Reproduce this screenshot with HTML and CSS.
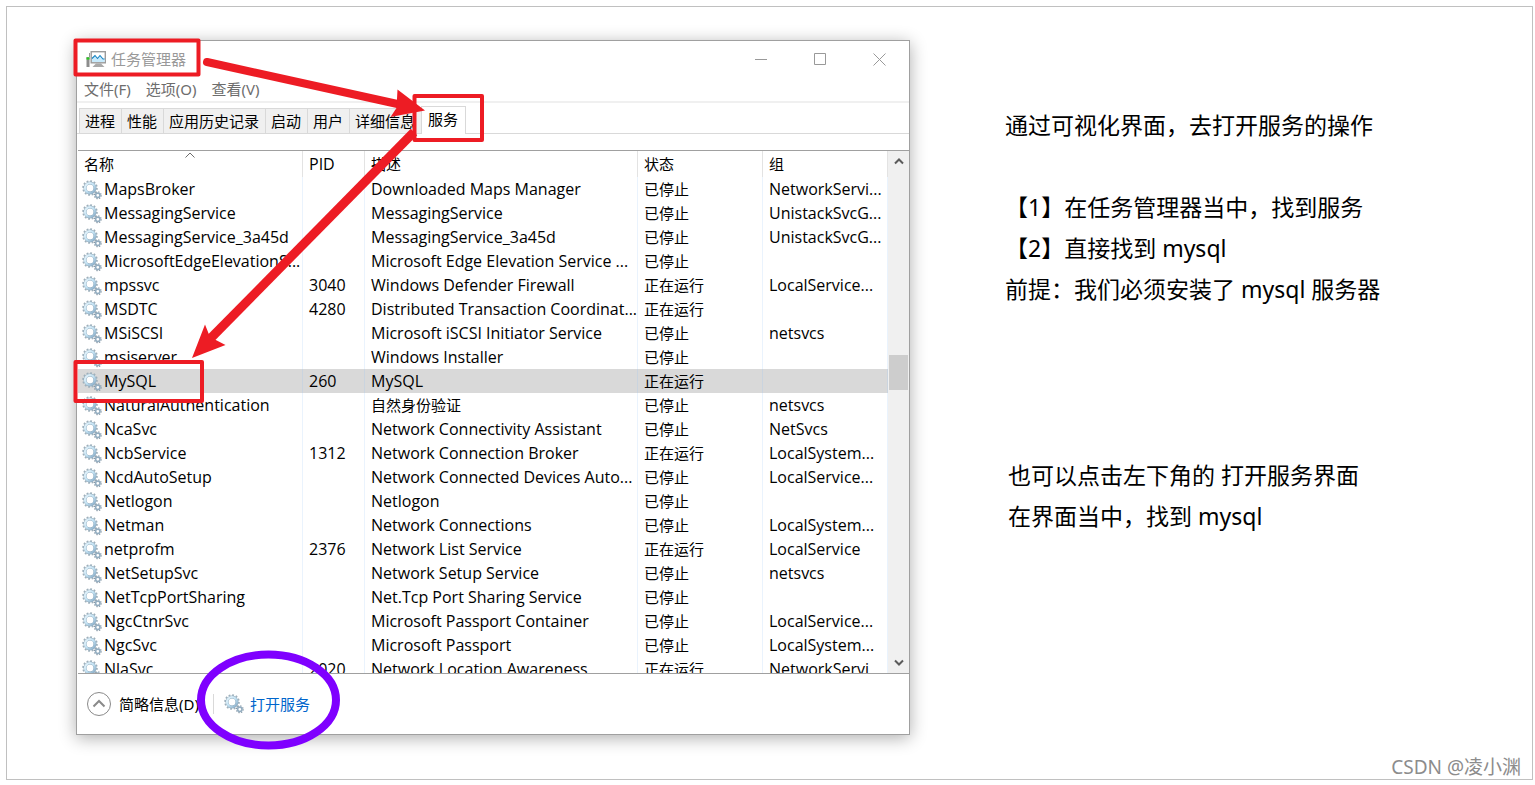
FILE: index.html
```html
<!DOCTYPE html>
<html lang="zh-CN">
<head>
<meta charset="utf-8">
<title>任务管理器</title>
<link rel="stylesheet" href="styles.css">
</head>
<body>
<svg class="sprite" aria-hidden="true">
  <defs>
    <linearGradient id="steel" x1="0" y1="0" x2="1" y2="1">
      <stop offset="0" stop-color="#e6f4fb"/><stop offset="0.5" stop-color="#c3e2f3"/><stop offset="1" stop-color="#86a9c4"/>
    </linearGradient>
    <symbol id="gear" viewBox="0 0 20 20">
      <circle cx="8" cy="8" r="6.9" fill="none" stroke="#9fb0bb" stroke-width="1.8" stroke-dasharray="1.8 1.81"/>
      <circle cx="8" cy="8" r="4.9" fill="none" stroke="#93adbf" stroke-width="3.2"/>
      <circle cx="8" cy="8" r="4.9" fill="none" stroke="url(#steel)" stroke-width="2.4"/>
      <circle cx="8" cy="8" r="3.2" fill="#fff"/>
      <circle cx="15.8" cy="15.3" r="3.4" fill="none" stroke="#8798a5" stroke-width="1.2" stroke-dasharray="1.3 1.37"/>
      <circle cx="15.8" cy="15.3" r="2.2" fill="#fff" stroke="#93adc0" stroke-width="1.6"/>
    </symbol>
  </defs>
</svg>
<main class="board">
  <div class="stage">
    <section class="window">
      <header class="titlebar">
        <svg class="app-icon" viewBox="0 0 20 18" aria-hidden="true">
          <path d="M3.500 3v4" stroke="#9b9b9b"/>
          <rect x="0.500" y="7" width="3" height="10" fill="#8c8c8c"/>
          <rect x="0.500" y="7.500" width="3" height="2" fill="#26d01c"/>
          <path d="M10 13.500h5l3.500 3.500h-12z" fill="#a9a9a9"/>
          <rect x="5.200" y="1.700" width="14.100" height="11.100" fill="#fff" stroke="#9b9b9b" stroke-width="1.400"/>
          <path d="M6 8.500L9 6l2.500 2.500L14 6l3 3h1.600v3.100H6z" fill="#c7eafc"/>
          <path d="M6 8.500L9 5.500l2.500 3L14 5.500l3 3.500h1.600" fill="none" stroke="#1583c2" stroke-width="1.100"/>
        </svg>
        <h1 class="title">任务管理器</h1>
        <div class="controls">
          <button class="control" type="button" aria-label="最小化"><svg viewBox="0 0 13 13"><path d="M0 6.500h12"/></svg></button>
          <button class="control" type="button" aria-label="最大化"><svg viewBox="0 0 13 13"><path d="M.5.5h11v11H.5z"/></svg></button>
          <button class="control" type="button" aria-label="关闭"><svg viewBox="0 0 13 13"><path d="M.5.5l12 12M12.500.5l-12 12"/></svg></button>
        </div>
      </header>
      <nav class="menu">
        <button type="button">文件(F)</button>
        <button type="button">选项(O)</button>
        <button type="button">查看(V)</button>
      </nav>
      <div class="tabs" role="tablist">
        <button class="tab" type="button" role="tab">进程</button>
        <button class="tab" type="button" role="tab">性能</button>
        <button class="tab" type="button" role="tab">应用历史记录</button>
        <button class="tab" type="button" role="tab">启动</button>
        <button class="tab" type="button" role="tab">用户</button>
        <button class="tab" type="button" role="tab">详细信息</button>
        <button class="tab tab-active" type="button" role="tab" aria-selected="true">服务</button>
      </div>
      <div class="list">
        <div class="viewport">
          <table class="services">
            <colgroup><col class="c-name"><col class="c-pid"><col class="c-desc"><col class="c-state"><col class="c-group"></colgroup>
            <thead>
              <tr>
                <th aria-sort="ascending">名称<svg class="sort" viewBox="0 0 10 6" aria-hidden="true"><path d="M.5 5.500L5 1l4.500 4.500"/></svg></th>
                <th class="latin">PID</th><th>描述</th><th>状态</th><th>组</th>
              </tr>
            </thead>
            <tbody>
              <tr><td><svg class="gear"><use href="#gear"/></svg>MapsBroker</td><td></td><td>Downloaded Maps Manager</td><td class="state">已停止</td><td>NetworkServi...</td></tr>
              <tr><td><svg class="gear"><use href="#gear"/></svg>MessagingService</td><td></td><td>MessagingService</td><td class="state">已停止</td><td>UnistackSvcG...</td></tr>
              <tr><td><svg class="gear"><use href="#gear"/></svg>MessagingService_3a45d</td><td></td><td>MessagingService_3a45d</td><td class="state">已停止</td><td>UnistackSvcG...</td></tr>
              <tr><td><svg class="gear"><use href="#gear"/></svg>MicrosoftEdgeElevationS...</td><td></td><td>Microsoft Edge Elevation Service ...</td><td class="state">已停止</td><td></td></tr>
              <tr><td><svg class="gear"><use href="#gear"/></svg>mpssvc</td><td>3040</td><td>Windows Defender Firewall</td><td class="state">正在运行</td><td>LocalService...</td></tr>
              <tr><td><svg class="gear"><use href="#gear"/></svg>MSDTC</td><td>4280</td><td>Distributed Transaction Coordinat...</td><td class="state">正在运行</td><td></td></tr>
              <tr><td><svg class="gear"><use href="#gear"/></svg>MSiSCSI</td><td></td><td>Microsoft iSCSI Initiator Service</td><td class="state">已停止</td><td>netsvcs</td></tr>
              <tr><td><svg class="gear"><use href="#gear"/></svg>msiserver</td><td></td><td>Windows Installer</td><td class="state">已停止</td><td></td></tr>
              <tr class="selected"><td><svg class="gear"><use href="#gear"/></svg>MySQL</td><td>260</td><td>MySQL</td><td class="state">正在运行</td><td></td></tr>
              <tr><td><svg class="gear"><use href="#gear"/></svg>NaturalAuthentication</td><td></td><td class="state">自然身份验证</td><td class="state">已停止</td><td>netsvcs</td></tr>
              <tr><td><svg class="gear"><use href="#gear"/></svg>NcaSvc</td><td></td><td>Network Connectivity Assistant</td><td class="state">已停止</td><td>NetSvcs</td></tr>
              <tr><td><svg class="gear"><use href="#gear"/></svg>NcbService</td><td>1312</td><td>Network Connection Broker</td><td class="state">正在运行</td><td>LocalSystem...</td></tr>
              <tr><td><svg class="gear"><use href="#gear"/></svg>NcdAutoSetup</td><td></td><td>Network Connected Devices Auto...</td><td class="state">已停止</td><td>LocalService...</td></tr>
              <tr><td><svg class="gear"><use href="#gear"/></svg>Netlogon</td><td></td><td>Netlogon</td><td class="state">已停止</td><td></td></tr>
              <tr><td><svg class="gear"><use href="#gear"/></svg>Netman</td><td></td><td>Network Connections</td><td class="state">已停止</td><td>LocalSystem...</td></tr>
              <tr><td><svg class="gear"><use href="#gear"/></svg>netprofm</td><td>2376</td><td>Network List Service</td><td class="state">正在运行</td><td>LocalService</td></tr>
              <tr><td><svg class="gear"><use href="#gear"/></svg>NetSetupSvc</td><td></td><td>Network Setup Service</td><td class="state">已停止</td><td>netsvcs</td></tr>
              <tr><td><svg class="gear"><use href="#gear"/></svg>NetTcpPortSharing</td><td></td><td>Net.Tcp Port Sharing Service</td><td class="state">已停止</td><td></td></tr>
              <tr><td><svg class="gear"><use href="#gear"/></svg>NgcCtnrSvc</td><td></td><td>Microsoft Passport Container</td><td class="state">已停止</td><td>LocalService...</td></tr>
              <tr><td><svg class="gear"><use href="#gear"/></svg>NgcSvc</td><td></td><td>Microsoft Passport</td><td class="state">已停止</td><td>LocalSystem...</td></tr>
              <tr><td><svg class="gear"><use href="#gear"/></svg>NlaSvc</td><td>2020</td><td>Network Location Awareness</td><td class="state">正在运行</td><td>NetworkServi...</td></tr>
            </tbody>
          </table>
        </div>
        <div class="scrollbar">
          <button type="button" aria-label="向上滚动"><svg viewBox="0 0 10 7"><path d="M1 5.500l4-4 4 4"/></svg></button>
          <span class="space-above"></span>
          <span class="thumb"></span>
          <span class="space-below"></span>
          <button type="button" aria-label="向下滚动"><svg viewBox="0 0 10 7"><path d="M1 1.500l4 4 4-4"/></svg></button>
        </div>
      </div>
      <footer class="footer">
        <button class="brief" type="button">
          <svg viewBox="0 0 26 26" aria-hidden="true"><circle cx="13" cy="13" r="11.500"/><path class="chevron" d="M7.500 15.500L13 10l5.500 5.500"/></svg>简略信息(D)
        </button>
        <a class="open" href="#services"><svg class="gear"><use href="#gear"/></svg>打开服务</a>
      </footer>
    </section>
    <svg class="marks" viewBox="76 40 834 695" aria-hidden="true">
      <g class="boxes">
        <rect x="75.500" y="40.500" width="123" height="34"/>
        <rect x="414.500" y="96" width="67.500" height="44"/>
        <rect x="75.500" y="362" width="126.500" height="39"/>
      </g>
      <g class="arrows">
        <path class="shaft" d="M207 62L402 105"/>
        <path d="M425 110.500L390.500 117l6-9 1-18.500z"/>
        <path class="shaft butt" d="M414 132L208 341"/>
        <path d="M192 358l13-33.500 5 12.500 15.500 8z"/>
      </g>
      <ellipse cx="268.500" cy="700" rx="67.500" ry="45.500"/>
    </svg>
  </div>
  <aside class="notes">
    <div class="note">
      <p>通过可视化界面，去打开服务的操作</p>
      <p class="spaced">【1】在任务管理器当中，找到服务</p>
      <p>【2】直接找到 mysql</p>
      <p>前提：我们必须安装了 mysql 服务器</p>
    </div>
    <div class="note note-second">
      <p>也可以点击左下角的 打开服务界面</p>
      <p>在界面当中，找到 mysql</p>
    </div>
  </aside>
  <small class="watermark">CSDN @凌小渊</small>
</main>
</body>
</html>
```
FILE: styles.css
```css
* { box-sizing: border-box; }
body {
  margin: 0;
  background: #fff;
  color: #000;
  font: 15px/24px "Noto Sans", "Noto Sans CJK SC", sans-serif;
}
button {
  margin: 0;
  padding: 0;
  border: 0;
  background: none;
  color: inherit;
  font: inherit;
}
p { margin: 0; }
.sprite { position: absolute; width: 0; height: 0; }

.board {
  position: relative;
  display: flex;
  align-items: flex-start;
  min-height: calc(100vh - 11px);
  margin: 6px 2px 5px 6px;
  padding: 33px 10px 44px 69px;
  border: 1px solid #c0c0c0;
}
.stage { position: relative; flex: 0 1 834px; min-width: 0; }
.window {
  border: 1px solid #a0a0a0;
  background: #fff;
  box-shadow: 0 3px 16px rgba(0, 0, 0, 0.32);
}

.titlebar { display: flex; align-items: center; height: 36px; padding-left: 9px; }
.app-icon { width: 20px; height: 18px; }
.title { flex: 1; margin: 0 0 0 5px; color: #999; font-size: 15px; font-weight: 400; }
.controls { display: flex; }
.control { display: flex; align-items: center; justify-content: center; width: 59px; height: 36px; }
.control svg { width: 13px; height: 13px; fill: none; stroke: #999; }

.menu {
  display: flex;
  gap: 15px;
  height: 26px;
  padding-left: 7px;
  border-bottom: 2px solid #f0f0f0;
  color: #6d6d6d;
}

.tabs {
  display: flex;
  align-items: flex-end;
  height: 31px;
  padding-left: 2px;
  border-bottom: 1px solid #d9d9d9;
}
.tab {
  height: 25px;
  padding: 0 6px 0 5px;
  border: 1px solid #d9d9d9;
  border-width: 1px 0 0 1px;
  background: #f0f0f0;
}
.tab-active {
  height: 28px;
  margin: 0 0 -1px;
  padding: 0 7px 3px 6px;
  border-right-width: 1px;
  background: #fff;
}

.list {
  display: flex;
  height: 524px;
  margin: 16px 0 0 1px;
  border: 1px solid #a0a0a0;
  border-width: 1px 0;
}
.viewport { flex: 1; min-width: 0; overflow: hidden; }
.services { width: 100%; table-layout: fixed; border-collapse: separate; border-spacing: 0; }
.c-name { width: 225px; }
.c-pid { width: 62px; }
.c-desc { width: 273px; }
.c-state { width: 125px; }
.services th, .services td {
  height: 24px;
  padding: 0 0 0 6px;
  overflow: hidden;
  border-right: 1px solid #eaf3fd;
  font-weight: 400;
  text-align: left;
  white-space: nowrap;
}
.services td, .services .latin { font-family: "Open Sans", "Noto Sans", sans-serif; font-size: 16px; }
.services .state { font-family: "Noto Sans CJK SC", sans-serif; font-size: 15px; }
.services th { position: relative; height: 26px; border-right-color: #e3e3e3; }
.services td:first-child { padding-left: 4px; }
.sort { position: absolute; top: 1px; left: calc(50% - 5px); width: 10px; height: 6px; fill: none; stroke: #6d6d6d; }
.services .selected td { background: #d9d9d9; border-right-color: #cad4df; }
.gear { width: 20px; height: 20px; }
.services .gear { margin: -2px 2px 0 0; vertical-align: middle; }

.scrollbar { display: flex; flex-direction: column; width: 21px; background: #f0f0f0; }
.scrollbar button { display: flex; align-items: center; justify-content: center; height: 21px; }
.scrollbar svg { width: 10px; height: 7px; fill: none; stroke: #5b5b5b; stroke-width: 2; }
.thumb { height: 35px; margin: 0 1px; background: #cdcdcd; }
.space-above { flex: 183; }
.space-below { flex: 262; }

.footer { display: flex; align-items: center; height: 60px; padding-left: 9px; }
.brief { display: flex; align-items: center; gap: 7px; }
.brief svg { width: 26px; height: 26px; fill: none; stroke: #8a8a8a; }
.brief .chevron { stroke-width: 2; }
.open {
  display: flex;
  align-items: center;
  gap: 6px;
  margin-left: 14px;
  padding-left: 10px;
  border-left: 1px solid #d9d9d9;
  color: #0066cc;
  line-height: 16px;
  text-decoration: none;
}

.marks { position: absolute; top: 0; left: 0; width: 100%; overflow: visible; pointer-events: none; }
.boxes { fill: none; stroke: #ed1c24; stroke-width: 4; stroke-linejoin: round; }
.arrows { fill: #ed1c24; }
.shaft { stroke: #ed1c24; stroke-width: 8; stroke-linecap: round; }
.butt { stroke-width: 9; stroke-linecap: butt; }
.marks ellipse { fill: none; stroke: #7f00ff; stroke-width: 8; }

.notes { flex: 1; padding: 65px 0 0 95px; font-size: 23px; line-height: 41px; }
.spaced { margin-top: 41px; }
.note-second { margin-top: 145px; padding-left: 3px; }

.watermark {
  position: absolute;
  right: 11px;
  bottom: 0;
  color: #8c8c8c;
  font-size: 19px;
  line-height: 24px;
  text-shadow: 1px 1px 0 #fff;
}
```
